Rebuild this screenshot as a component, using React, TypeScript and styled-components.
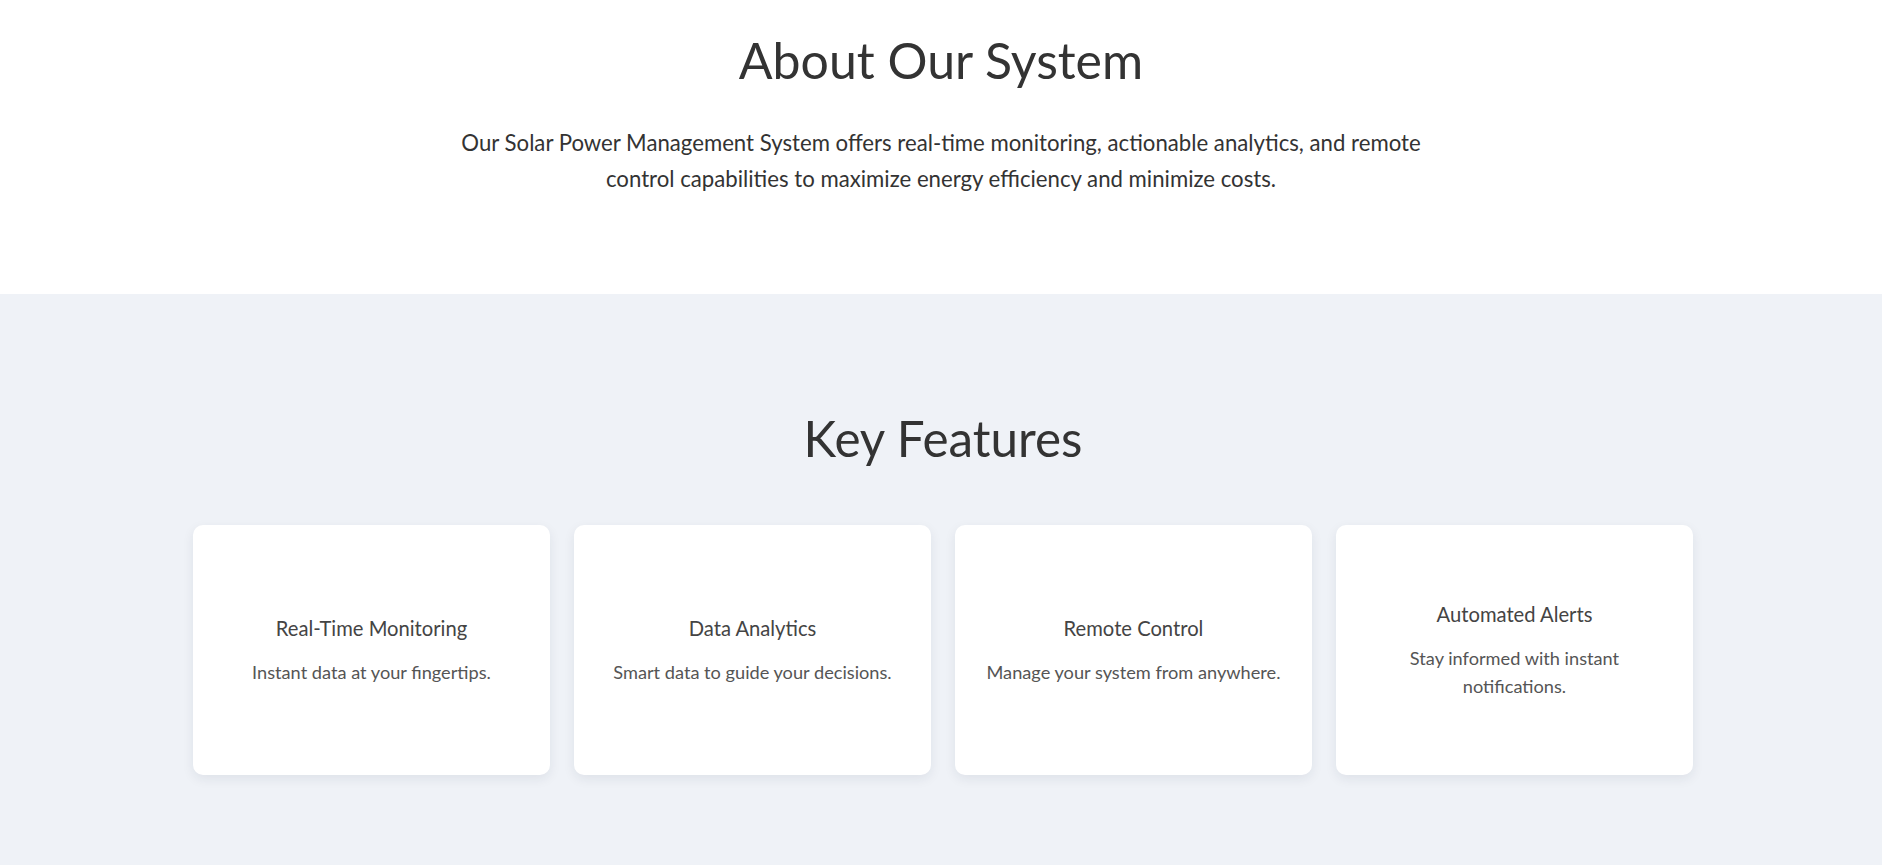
import React from "react";
import styled, { createGlobalStyle } from "styled-components";

const Global = createGlobalStyle`
  html, body { margin: 0; padding: 0; }
  body {
    font-family: Lato, "Open Sans", sans-serif;
    color: #333;
    background: #eff2f7;
  }
  * { box-sizing: border-box; }
`;

const AboutSection = styled.section`
  background: #ffffff;
  text-align: center;
  padding: 29px 20px 97px;
`;

const PageTitle = styled.h1`
  margin: 0;
  font-size: 50px;
  line-height: 62px;
  font-weight: 400;
  color: #333;
`;

const Lead = styled.p`
  margin: 34px auto 0;
  max-width: 1000px;
  font-size: 22.2px;
  line-height: 36px;
  color: #333;
`;

const FeaturesSection = styled.section`
  background: #eff2f7;
  text-align: center;
  padding: 114px 20px 92px 24px;
`;

const SectionTitle = styled.h2`
  margin: 0;
  font-size: 49.4px;
  line-height: 60px;
  font-weight: 400;
  color: #333;
`;

const Grid = styled.div`
  margin: 57px auto 0;
  width: 1500px;
  display: grid;
  grid-template-columns: repeat(4, 1fr);
  gap: 24px;
`;

const Card = styled.div`
  background: #fff;
  border-radius: 10px;
  height: 250px;
  padding: 2px 28px 0;
  display: flex;
  flex-direction: column;
  justify-content: center;
  align-items: center;
  box-shadow: 0 4px 12px rgba(30, 40, 60, 0.08);
`;

const CardTitle = styled.h3`
  margin: 0;
  font-size: 20.2px;
  line-height: 25px;
  font-weight: 400;
  color: #444;
`;

const CardText = styled.p`
  margin: 17px 0 0;
  font-size: 18.2px;
  line-height: 28px;
  color: #555;
`;

const features = [
  { title: "Real-Time Monitoring", text: "Instant data at your fingertips." },
  { title: "Data Analytics", text: "Smart data to guide your decisions." },
  { title: "Remote Control", text: "Manage your system from anywhere." },
  { title: "Automated Alerts", text: "Stay informed with instant notifications." },
];

export default function App() {
  return (
    <>
      <Global />
      <AboutSection>
        <PageTitle>About Our System</PageTitle>
        <Lead>
          Our Solar Power Management System offers real-time monitoring, actionable analytics, and remote
          control capabilities to maximize energy efficiency and minimize costs.
        </Lead>
      </AboutSection>
      <FeaturesSection>
        <SectionTitle>Key Features</SectionTitle>
        <Grid>
          {features.map((f) => (
            <Card key={f.title}>
              <CardTitle>{f.title}</CardTitle>
              <CardText>{f.text}</CardText>
            </Card>
          ))}
        </Grid>
      </FeaturesSection>
    </>
  );
}
